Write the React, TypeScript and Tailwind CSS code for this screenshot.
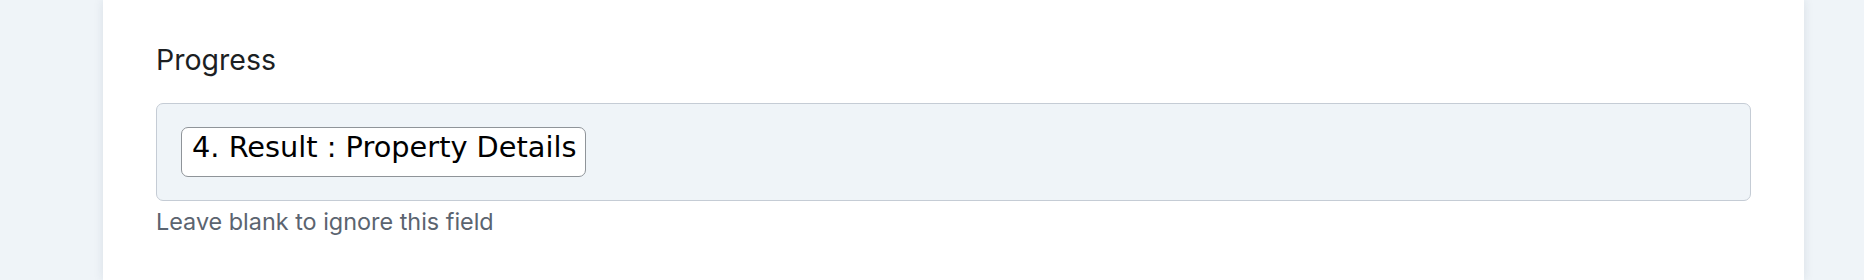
import React from 'react';

export default function App() {
  const value = '4. Result : Property Details';

  return (
    <div className="h-[280px] w-full overflow-hidden bg-[#eff4f8] pl-[103px] pr-[60px]">
      <div className="h-full bg-white pt-[43px] px-[53px] shadow-[0_0_10px_rgba(30,50,80,0.10)]">
        <label
          className="block text-[28.5px] leading-[34px] text-[#1c1f23]"
          style={{ fontFamily: 'Inter, "Noto Sans", sans-serif' }}
        >
          Progress
        </label>

        <div className="mt-[26px] flex h-[98px] items-center rounded-[7px] border-[1.5px] border-[#c5ccd5] bg-[#eff4f8] px-[24px]">
          <span
            className="h-[50px] rounded-[7px] border-[1.5px] border-[#8f9499] bg-white pt-[3px] pl-[10px] pr-[9px] text-[28.8px] leading-[32px] text-black"
            style={{ fontFamily: '"DejaVu Sans", Verdana, sans-serif' }}
          >
            {value}
          </span>
        </div>

        <p
          className="mt-[7px] text-[23.4px] leading-[28px] text-[#5b6470]"
          style={{ fontFamily: 'Inter, "Noto Sans", sans-serif' }}
        >
          Leave blank to ignore this field
        </p>
      </div>
    </div>
  );
}
